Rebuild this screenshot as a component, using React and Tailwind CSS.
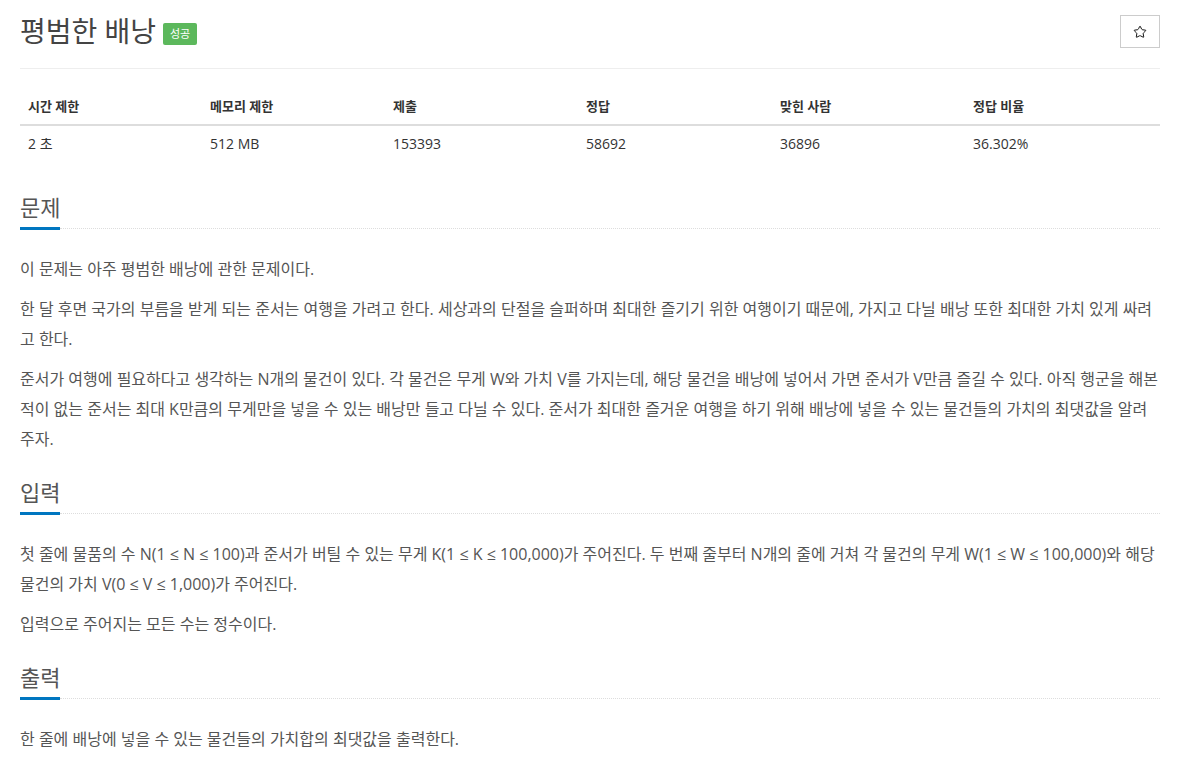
import { Star } from 'lucide-react'

const STATS = [
  { label: '시간 제한', value: '2 초' },
  { label: '메모리 제한', value: '512 MB' },
  { label: '제출', value: '153393' },
  { label: '정답', value: '58692' },
  { label: '맞힌 사람', value: '36896' },
  { label: '정답 비율', value: '36.302%' },
]

const Headline = ({ title, className = '' }) => (
  <div className={className}>
    <h2 className="text-[22px] leading-[34px] text-[#555] pb-[3px]">{title}</h2>
    <div className="flex items-center h-[3px]">
      <div className="w-[40px] h-[3px] bg-[#0076c0]" />
      <div className="flex-1 border-t border-dotted border-[#ddd]" />
    </div>
  </div>
)

export default function App() {
  return (
    <div className="bg-white min-h-[764px] font-['Open_Sans','Noto_Sans_CJK_KR',sans-serif] text-[#333]">
      <div className="ml-5 w-[1140px]">
        {/* 제목 */}
        <div className="flex items-center justify-between pt-[15px] pb-[20px] border-b border-[#eee]">
          <div className="flex items-center">
            <h1 className="text-[28px] leading-[33px] text-[#444]">평범한 배낭</h1>
            <span className="ml-[7px] mt-[5px] w-[34px] h-[22px] bg-[#5cb85c] text-white text-[11px] rounded-[2px] flex items-center justify-center">
              성공
            </span>
          </div>
          <button className="w-[40px] h-[33px] border border-[#ccc] bg-white flex items-center justify-center">
            <Star size={14} strokeWidth={1.7} className="text-[#111]" />
          </button>
        </div>

        {/* 통계 */}
        <div className="mt-[19px] text-[14px]">
          <div className="grid grid-cols-[182px_183px_193px_194px_193px_1fr] border-b-2 border-[#ddd]">
            {STATS.map(s => (
              <div key={s.label} className="px-2 py-2 leading-[20px] font-bold text-[13px]">{s.label}</div>
            ))}
          </div>
          <div className="grid grid-cols-[182px_183px_193px_194px_193px_1fr]">
            {STATS.map(s => (
              <div key={s.label} className="px-2 py-2 leading-[20px]">{s.value}</div>
            ))}
          </div>
        </div>

        {/* 문제 */}
        <Headline title="문제" className="mt-[28px]" />
        <div className="mt-[24px] text-[16px] leading-[30px] text-[#555] space-y-[10px]">
          <p>이 문제는 아주 평범한 배낭에 관한 문제이다.</p>
          <p>
            한 달 후면 국가의 부름을 받게 되는 준서는 여행을 가려고 한다. 세상과의 단절을 슬퍼하며 최대한 즐기기 위한 여행이기 때문에, 가지고 다닐 배낭 또한 최대한 가치 있게 싸려고 한다.
          </p>
          <p>
            준서가 여행에 필요하다고 생각하는 N개의 물건이 있다. 각 물건은 무게 W와 가치 V를 가지는데, 해당 물건을 배낭에 넣어서 가면 준서가 V만큼 즐길 수 있다. 아직 행군을 해본 적이 없는 준서는 최대 K만큼의 무게만을 넣을 수 있는 배낭만 들고 다닐 수 있다. 준서가 최대한 즐거운 여행을 하기 위해 배낭에 넣을 수 있는 물건들의 가치의 최댓값을 알려주자.
          </p>
        </div>

        {/* 입력 */}
        <Headline title="입력" className="mt-[21px]" />
        <div className="mt-[24px] text-[16px] leading-[30px] text-[#555] space-y-[10px]">
          <p>
            첫 줄에 물품의 수 N(1 ≤ N ≤ 100)과 준서가 버틸 수 있는 무게 K(1 ≤ K ≤ 100,000)가 주어진다. 두 번째 줄부터 N개의 줄에 거쳐 각 물건의 무게 W(1 ≤ W ≤ 100,000)와 해당 물건의 가치 V(0 ≤ V ≤ 1,000)가 주어진다.
          </p>
          <p>입력으로 주어지는 모든 수는 정수이다.</p>
        </div>

        {/* 출력 */}
        <Headline title="출력" className="mt-[21px]" />
        <div className="mt-[24px] text-[16px] leading-[30px] text-[#555]">
          <p>한 줄에 배낭에 넣을 수 있는 물건들의 가치합의 최댓값을 출력한다.</p>
        </div>
      </div>
    </div>
  )
}
